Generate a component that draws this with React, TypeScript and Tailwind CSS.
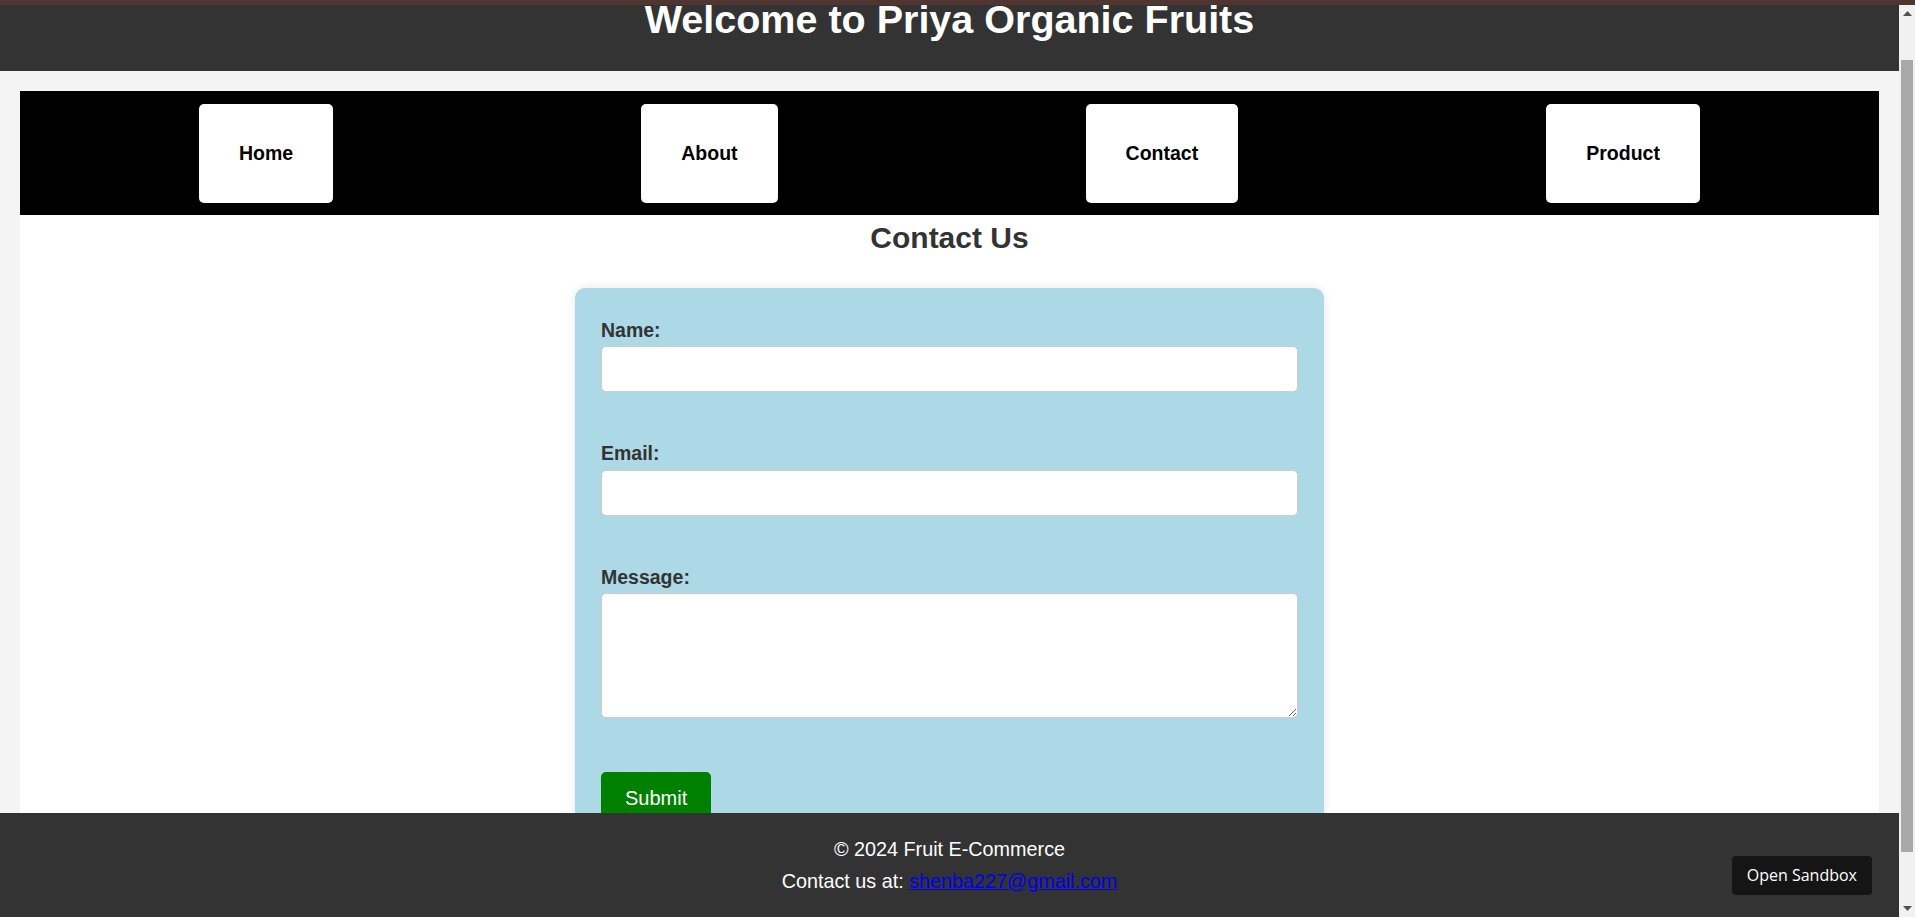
import React from "react";

function NavButton({ label }: { label: string }) {
  return (
    <a className="flex h-[99px] items-center rounded-[5px] bg-white px-[40px] text-[19.5px] font-bold leading-[23px] text-black">
      {label}
    </a>
  );
}

function Field({ label, children, last }: { label: string; children: React.ReactNode; last?: boolean }) {
  return (
    <div className={last ? "" : "mb-[50px]"}>
      <label className="mb-[4.5px] block text-[19.5px] font-bold leading-[23px] text-[#333]">{label}</label>
      {children}
    </div>
  );
}

export default function App() {
  return (
    <div className="flex h-[917px] w-full flex-col overflow-hidden bg-[#f4f4f4] font-['Liberation_Sans',Arial,sans-serif]">
      <div className="h-[5px] shrink-0 bg-[#503530]" />
      <div className="flex min-h-0 flex-1">
        <div className="relative min-w-0 flex-1 overflow-hidden bg-[#f4f4f4]">
          <header className="h-[66px] overflow-hidden bg-[#333]">
            <h1 className="-mt-[6px] text-center text-[39.5px] font-bold leading-[40px] text-white">
              Welcome to Priya Organic Fruits
            </h1>
          </header>

          <div className="mx-[20px] mt-[20px] bg-white pb-[200px]">
            <nav className="flex justify-around bg-black px-[25px] pb-[12px] pt-[13px]">
              <NavButton label="Home" />
              <NavButton label="About" />
              <NavButton label="Contact" />
              <NavButton label="Product" />
            </nav>

            <h2 className="mt-[6px] text-center text-[30px] font-bold leading-[34.5px] text-[#333]">Contact Us</h2>

            <form className="mx-auto mt-[32.5px] w-[749px] rounded-[10px] bg-[#add8e6] px-[26px] pb-[30px] pt-[30.5px] shadow-[0_0_10px_rgba(0,0,0,0.1)]">
              <Field label="Name:">
                <input type="text" className="block h-[46px] w-full rounded-[5px] border border-[#ccc] bg-white px-[12px] outline-none" />
              </Field>
              <Field label="Email:">
                <input type="email" className="block h-[46px] w-full rounded-[5px] border border-[#ccc] bg-white px-[12px] outline-none" />
              </Field>
              <Field label="Message:" last>
                <textarea className="block h-[125px] w-full resize-y rounded-[5px] border border-[#ccc] bg-white p-[12px] outline-none" />
              </Field>
              <button
                type="button"
                className="mt-[54px] rounded-[5px] bg-[#008000] px-[24px] pb-[12px] pt-[15px] text-[20px] leading-[23px] text-white"
              >
                Submit
              </button>
            </form>
          </div>

          <footer className="absolute bottom-0 left-0 right-0 h-[104px] bg-[#333] pt-[24.5px] text-center text-[19.8px] leading-[23px] text-white">
            <p>© 2024 Fruit E-Commerce</p>
            <p className="mt-[9px]">
              Contact us at: <a className="text-[#0000ee] underline">shenba227@gmail.com</a>
            </p>
          </footer>

          <button
            type="button"
            className="absolute bottom-[22.5px] right-[27px] flex h-[39px] items-center rounded-[4px] bg-[#151515] px-[15px] font-['Open_Sans',sans-serif] text-[16px] text-white"
          >
            Open Sandbox
          </button>
        </div>

        <div className="flex w-[16px] shrink-0 flex-col bg-[#f1f1f1]">
          <div className="flex h-[17px] shrink-0 items-center justify-center">
            <svg width="9" height="5" viewBox="0 0 9 5">
              <path d="M0 5 L4.5 0 L9 5 Z" fill="#505050" />
            </svg>
          </div>
          <div className="flex-1 px-[2px] pt-[38px]">
            <div className="h-[792px] w-full bg-[#a8a8a8]" />
          </div>
          <div className="flex h-[17px] shrink-0 items-center justify-center">
            <svg width="9" height="5" viewBox="0 0 9 5">
              <path d="M0 0 L9 0 L4.5 5 Z" fill="#505050" />
            </svg>
          </div>
        </div>
      </div>
    </div>
  );
}
